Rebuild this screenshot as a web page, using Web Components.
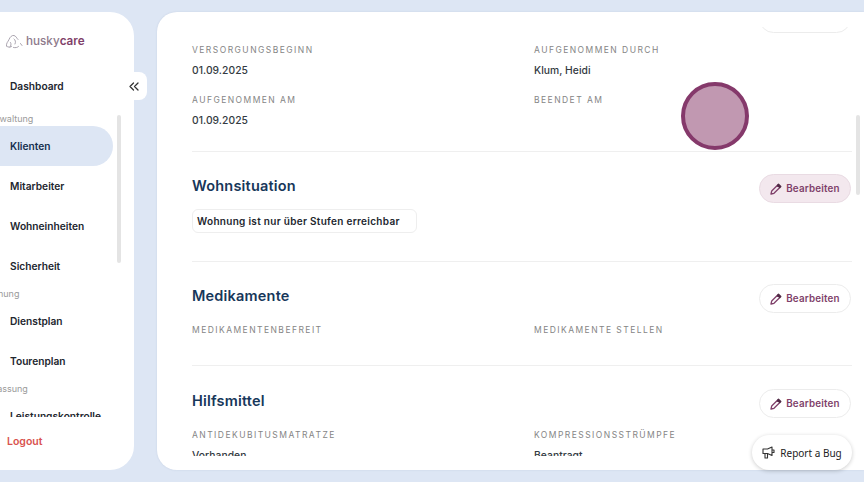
<!DOCTYPE html>
<html lang="de">
<head>
<meta charset="utf-8">
<title>huskycare</title>
<style>
  html, body { margin: 0; height: 100%; }
  body { background: #dde6f4; font-family: Inter, "Liberation Sans", sans-serif; overflow: hidden; }
</style>
</head>
<body>
<hc-app>
  <hc-sidebar slot="sidebar">
    <hc-nav-item style="margin-bottom:5px">Dashboard</hc-nav-item>
    <hc-nav-label>Verwaltung</hc-nav-label>
    <hc-nav-item active>Klienten</hc-nav-item>
    <hc-nav-item>Mitarbeiter</hc-nav-item>
    <hc-nav-item>Wohneinheiten</hc-nav-item>
    <hc-nav-item>Sicherheit</hc-nav-item>
    <hc-nav-label>Planung</hc-nav-label>
    <hc-nav-item>Dienstplan</hc-nav-item>
    <hc-nav-item>Tourenplan</hc-nav-item>
    <hc-nav-label>Erfassung</hc-nav-label>
    <hc-nav-item>Leistungskontrolle</hc-nav-item>
  </hc-sidebar>
  <hc-main slot="main">
    <hc-section>
      <hc-field label="Versorgungsbeginn">01.09.2025</hc-field>
      <hc-field label="Aufgenommen durch">Klum, Heidi</hc-field>
      <hc-field label="Aufgenommen am">01.09.2025</hc-field>
      <hc-field label="Beendet am"></hc-field>
    </hc-section>
    <hc-section heading="Wohnsituation" hover>
      <hc-chip>Wohnung ist nur über Stufen erreichbar</hc-chip>
    </hc-section>
    <hc-section heading="Medikamente">
      <hc-field label="Medikamentenbefreit"></hc-field>
      <hc-field label="Medikamente stellen"></hc-field>
    </hc-section>
    <hc-section heading="Hilfsmittel" style="padding-top:23px">
      <hc-field label="Antidekubitusmatratze">Vorhanden</hc-field>
      <hc-field label="Kompressionsstrümpfe">Beantragt</hc-field>
    </hc-section>
  </hc-main>
</hc-app>
<hc-click-marker></hc-click-marker>
<hc-report-bug>Report a Bug</hc-report-bug>

<script>
class HcApp extends HTMLElement {
  constructor() {
    super();
    this.attachShadow({ mode: 'open' });
    this.shadowRoot.innerHTML = `
      <style>
        :host { display: flex; height: 482px; box-sizing: border-box; padding: 12px 0; gap: 23px; overflow: hidden; }
        ::slotted([slot=sidebar]) { flex: none; }
        ::slotted([slot=main]) { flex: 1; min-width: 0; }
      </style>
      <slot name="sidebar"></slot>
      <slot name="main"></slot>
    `;
  }
}

class HcSidebar extends HTMLElement {
  constructor() {
    super();
    this.attachShadow({ mode: 'open' });
    this.shadowRoot.innerHTML = `
      <style>
        :host { display: flex; flex-direction: column; position: relative; width: 174px; margin-left: -40px; background: #fff; border-radius: 24px; }
        .logo { display: flex; align-items: center; gap: 3px; height: 20px; margin: 19px 0 0 45px; font: 500 11.7px Inter, sans-serif; color: #8e7a8b; }
        .logo b { font-weight: 600; color: #7f3f6a; }
        .clip { height: 351px; margin-top: 15px; overflow: hidden; position: relative; padding-left: 15px; }
        .bar { position: absolute; left: 157px; top: 103px; width: 4px; height: 148px; background: #e4e4e4; border-radius: 2px; }
        .toggle { position: absolute; left: 165px; top: 60px; width: 18px; height: 28px; padding-right: 4px; background: #fff; border-radius: 0 8px 8px 0; display: flex; align-items: center; justify-content: center; }
        .logout { margin: 17px 0 0 47px; font: 600 10.5px/16px Inter, sans-serif; color: #d9534f; }
      </style>
      <div class="logo">
        <svg width="18" height="15" viewBox="0 0 18 15" fill="none" stroke="#a09aa6" stroke-width=".9" stroke-linecap="round" stroke-linejoin="round">
          <path d="M1.500 12C1 9 3 8 4 5.500 5 3 7 1 9 1.500c2 .5 2.500 2.500 4 4"/><path d="M1.500 12c1.500 1.500 3.500 1.500 5 .5M5 13c1-1 1.500-3 .5-4.500"/><path d="M8.500 13.500c2 .5 4 0 5-1M9 5c1.500 1 2 3 1 5"/><path d="M15.500 9.500l1.500 2"/>
        </svg>
        <span>husky<b>care</b></span>
      </div>
      <div class="clip"><slot></slot></div>
      <div class="bar"></div>
      <div class="toggle">
        <svg width="10" height="9" viewBox="0 0 10 9" fill="none" stroke="#333" stroke-width="1.300" stroke-linecap="round" stroke-linejoin="round"><path d="M4.500 1 1 4.500 4.500 8M9 1 5.500 4.500 9 8"/></svg>
      </div>
      <div class="logout">Logout</div>
    `;
  }
}

class HcNavItem extends HTMLElement {
  constructor() {
    super();
    this.attachShadow({ mode: 'open' });
    this.shadowRoot.innerHTML = `
      <style>
        :host { display: flex; align-items: center; width: 138px; height: 40px; box-sizing: border-box; padding-left: 35px; font: 600 10.2px Inter, sans-serif; color: #22262e; border-radius: 0 20px 20px 0; white-space: nowrap; }
        :host([active]) { background: #dde6f4; color: #15304f; }
      </style>
      <slot></slot>
    `;
  }
}

class HcNavLabel extends HTMLElement {
  constructor() {
    super();
    this.attachShadow({ mode: 'open' });
    this.shadowRoot.innerHTML = `
      <style>
        :host { display: block; height: 15px; padding-left: 10px; font: 400 9px/16px Inter, sans-serif; color: #9a9a9a; white-space: nowrap; }
      </style>
      <slot></slot>
    `;
  }
}

class HcMain extends HTMLElement {
  constructor() {
    super();
    this.attachShadow({ mode: 'open' });
    this.shadowRoot.innerHTML = `
      <style>
        :host { display: block; position: relative; box-sizing: border-box; padding-top: 15px; background: #fff; border-radius: 20px 0 0 20px; box-shadow: 0 0 2px rgba(90,110,150,.18); }
        .scroll { height: 429px; overflow: hidden; }
        .inner { margin-top: -45px; padding: 0 12px 0 35px; }
        .bar { position: absolute; left: 699px; top: 103px; width: 4px; height: 80px; background: #e4e4e4; border-radius: 2px; }
      </style>
      <div class="scroll"><div class="inner"><slot></slot></div></div>
      <div class="bar"></div>
    `;
  }
}

class HcSection extends HTMLElement {
  constructor() {
    super();
    this.attachShadow({ mode: 'open' });
    const heading = this.getAttribute('heading') || '';
    const hover = this.hasAttribute('hover') ? 'hover' : '';
    this.shadowRoot.innerHTML = `
      <style>
        :host { display: block; padding-top: 22px; border-bottom: 1px solid #efefef; }
        :host(:last-child) { border-bottom: 0; }
        .head { display: flex; align-items: center; justify-content: space-between; height: 29px; }
        h2 { margin: 0 0 7px; font: 600 14.500px Inter, sans-serif; letter-spacing: .2px; color: #17375a; }
        .body { display: grid; grid-template-columns: 342px 1fr; row-gap: 16px; padding: 11px 0 23px; }
      </style>
      <div class="head"><h2>${heading}</h2><hc-edit-button ${hover}></hc-edit-button></div>
      <div class="body"><slot></slot></div>
    `;
  }
}

class HcField extends HTMLElement {
  constructor() {
    super();
    this.attachShadow({ mode: 'open' });
    this.shadowRoot.innerHTML = `
      <style>
        :host { display: block; }
        .label { font: 400 8.5px/12px Inter, sans-serif; letter-spacing: 1.45px; text-transform: uppercase; color: #858585; white-space: nowrap; }
        .value { margin-top: 6px; font: 500 10.3px/16px Inter, sans-serif; color: #333a42; letter-spacing: .05px; }
      </style>
      <div class="label">${this.getAttribute('label')}</div>
      <div class="value"><slot></slot></div>
    `;
  }
}

class HcChip extends HTMLElement {
  constructor() {
    super();
    this.attachShadow({ mode: 'open' });
    this.shadowRoot.innerHTML = `
      <style>
        :host { grid-column: 1 / -1; display: flex; align-items: center; width: 225px; height: 24px; box-sizing: border-box; margin: -5px 0 5px; padding-left: 4px; border: 1px solid #eee; border-radius: 6px; font: 600 10px Inter, sans-serif; letter-spacing: .3px; color: #22262e; white-space: nowrap; }
      </style>
      <slot></slot>
    `;
  }
}

class HcEditButton extends HTMLElement {
  constructor() {
    super();
    this.attachShadow({ mode: 'open' });
    this.shadowRoot.innerHTML = `
      <style>
        :host { display: flex; align-items: center; justify-content: center; gap: 4px; width: 92px; height: 29px; margin-right: 1px; box-sizing: border-box; border: 1px solid #ececec; border-radius: 15px; background: #fff; font: 600 9.8px Inter, sans-serif; letter-spacing: .2px; color: #7f3f6a; }
        :host([hover]) { background: #f3e8ee; border-color: #e9dbe3; }
      </style>
      <svg width="12" height="12" viewBox="0 0 12 12" fill="none" stroke="#7f3f6a" stroke-width="1.300" stroke-linejoin="round" stroke-linecap="round"><path d="M1 11l.7-3L7.500 2.200l2.300 2.300L4 10.300 1 11z"/><path d="M8.500 1.200l2.300 2.300-1 1-2.300-2.300z" fill="#4f2a45" stroke="#4f2a45"/></svg>
      <span>Bearbeiten</span>
    `;
  }
}

class HcClickMarker extends HTMLElement {
  constructor() {
    super();
    this.attachShadow({ mode: 'open' });
    this.shadowRoot.innerHTML = `
      <style>
        :host { position: absolute; left: 681px; top: 82px; width: 68px; height: 68px; box-sizing: border-box; border: 4px solid #85396b; border-radius: 50%; background: #c198b1; }
      </style>
    `;
  }
}

class HcReportBug extends HTMLElement {
  constructor() {
    super();
    this.attachShadow({ mode: 'open' });
    this.shadowRoot.innerHTML = `
      <style>
        :host { position: absolute; left: 752px; top: 435px; width: 100px; height: 35px; box-sizing: border-box; display: flex; align-items: center; justify-content: center; gap: 5px; background: #fff; border-radius: 18px; box-shadow: 0 1px 4px rgba(0,0,0,.2); font: 400 10px "Noto Sans", sans-serif; color: #222; white-space: nowrap; }
      </style>
      <svg width="13" height="13" viewBox="0 0 13 13" fill="none" stroke="#333" stroke-width="1.100" stroke-linejoin="round" stroke-linecap="round"><path d="M1 3h4.500L10 1v8.500L5.500 7.500H1zM3 7.500V12h2.500V7.500M10 4h2v2.500h-2"/></svg>
      <slot></slot>
    `;
  }
}

customElements.define('hc-app', HcApp);
customElements.define('hc-sidebar', HcSidebar);
customElements.define('hc-nav-item', HcNavItem);
customElements.define('hc-nav-label', HcNavLabel);
customElements.define('hc-main', HcMain);
customElements.define('hc-section', HcSection);
customElements.define('hc-field', HcField);
customElements.define('hc-chip', HcChip);
customElements.define('hc-edit-button', HcEditButton);
customElements.define('hc-click-marker', HcClickMarker);
customElements.define('hc-report-bug', HcReportBug);
</script>
</body>
</html>
